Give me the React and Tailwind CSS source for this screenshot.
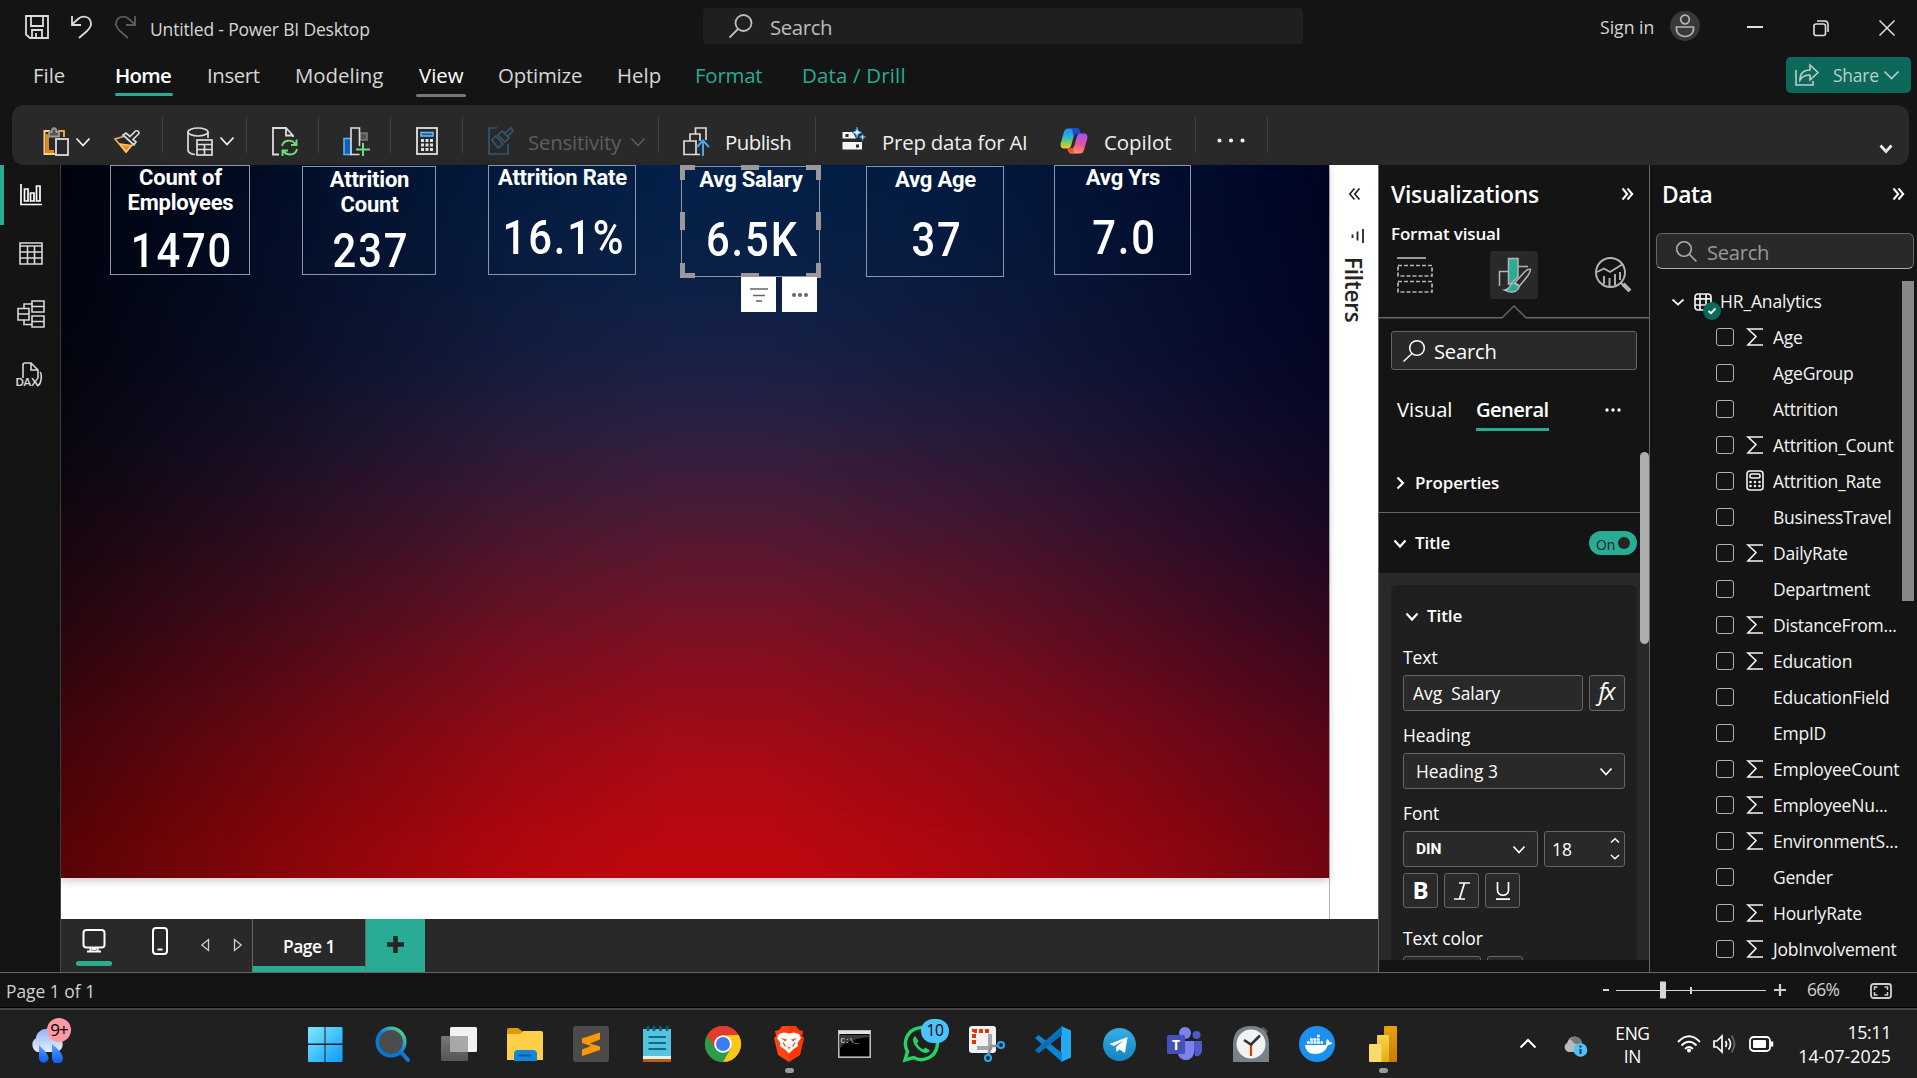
import React from "react";

const Svg = ({ w, h, vb, className = "", children, sw = 1.5 }) => (
  <svg
    width={w}
    height={h}
    viewBox={vb || `0 0 ${w} ${h}`}
    fill="none"
    stroke="currentColor"
    strokeWidth={sw}
    className={`block shrink-0 overflow-visible ${className}`}
  >
    {children}
  </svg>
);

const Chevron = ({ w = 14, h = 7, sw = 1.8, className = "" }) => (
  <Svg w={w} h={h} sw={sw} className={className}>
    <path d={`M0.5 0.5 L${w / 2} ${h - 0.5} L${w - 0.5} 0.5`} />
  </Svg>
);

/* ---------- Title bar ---------- */

function TitleBar() {
  return (
    <div className="flex h-[52px] items-start text-[#d6d6d6]">
      <Svg w={24} h={24} sw={1.8} className="mt-[15px] ml-[25px] text-[#dcdcdc]">
        <path d="M1 1H23V23H5L1 19.5Z M6 1V11H18V1 M7 23V15H17V23 M11 18V23" />
      </Svg>
      <Svg w={21} h={24} sw={1.8} className="mt-[15px] ml-[22px] text-[#dcdcdc]">
        <path d="M1 1V10H10 M1 9.5L7 4C11 0 20 1 20 9C20 12 18 14 16 16L8 23" />
      </Svg>
      <Svg w={21} h={24} sw={1.8} className="mt-[15px] ml-[23px] text-[#5c5c5c]">
        <path d="M20 1V10H11 M20 9.5L14 4C10 0 1 1 1 9C1 12 3 14 5 16L13 23" />
      </Svg>
      <span className="mt-[15px] ml-[14px] w-[230px] text-[17.5px] leading-[28px] tracking-[-0.01em]">
        Untitled - Power BI Desktop
      </span>
      <div className="mt-[8px] ml-[323px] flex h-[36px] w-[600px] items-center rounded bg-[#1f1f1f] pl-[26px] text-[#bdbdbd]">
        <Svg w={24} h={24} sw={1.8}>
          <circle cx="14.5" cy="9" r="8" />
          <path d="M9 15L0.5 23.5" />
        </Svg>
        <span className="mt-[1px] ml-[17px] text-[20.4px] leading-[30px] tracking-[-0.02em]">Search</span>
      </div>
      <span className="mt-[13px] ml-[297px] w-[56px] text-[17.6px] leading-[28px]">Sign in</span>
      <div className="mt-[11px] ml-[14px] flex h-[30px] w-[30px] items-center justify-center rounded-full bg-[#383838]">
        <Svg w={20} h={24} sw={1.7} className="text-[#b5b5b5]">
          <circle cx="10" cy="5.5" r="4.3" />
          <path d="M1.5 13H18.5V15C18.500 20 14 22.500 10 22.500S1.500 20 1.500 15Z" />
        </Svg>
      </div>
      <div className="mt-[26px] ml-[47px] h-[2px] w-[16px] bg-[#dedede]" />
      <Svg w={16} h={16} sw={1.6} className="mt-[20px] ml-[50px] text-[#e0e0e0]">
        <rect x="1" y="4" width="11.500" height="11.500" rx="2" />
        <path d="M4 1H11.500Q15 1 15 4.500V12" />
      </Svg>
      <Svg w={16} h={16} sw={1.5} className="mt-[20px] ml-[50px] text-[#e0e0e0]">
        <path d="M0.500 0.500L15.500 15.500M15.500 0.500L0.500 15.500" />
      </Svg>
    </div>
  );
}

/* ---------- Menu tabs ---------- */

const menuTabs = [
  { label: "File", cls: "ml-[33px] w-[34px]" },
  { label: "Home", cls: "ml-[48px] w-[58px] font-semibold text-white tracking-[-0.035em]", bar: "mt-[3px] w-[58px] bg-[#2aac94]" },
  { label: "Insert", cls: "ml-[34px] w-[54px] tracking-[-0.02em]" },
  { label: "Modeling", cls: "ml-[34px] w-[90px]" },
  { label: "View", cls: "ml-[34px] w-[46px] font-medium text-white", bar: "mt-[4px] -ml-[3px] w-[50px] bg-[#777777]" },
  { label: "Optimize", cls: "ml-[33px] w-[87px] tracking-[-0.01em]" },
  { label: "Help", cls: "ml-[32px] w-[44px]" },
  { label: "Format", cls: "ml-[34px] w-[70px] text-[#2aac94] tracking-[-0.01em]" },
  { label: "Data / Drill", cls: "ml-[37px] w-[110px] text-[#2aac94] tracking-[0.01em]" },
];

function MenuBar() {
  return (
    <div className="flex h-[53px] text-[20.4px] text-[#d6d6d6]">
      {menuTabs.map((t) => (
        <div key={t.label} className={`pt-[8px] whitespace-nowrap ${t.cls}`}>
          <div className="leading-[30px]">{t.label}</div>
          {t.bar && <div className={`h-[3px] rounded-sm ${t.bar}`} />}
        </div>
      ))}
      <div className="mt-[5px] mr-[6px] ml-auto flex h-[36px] w-[125px] items-center rounded-[5px] bg-[#0c695a] pl-[9px] text-[#b9cfca]">
        <Svg w={24} h={22} sw={1.6}>
          <path d="M1 6V21H18V17 M5 16C5 9 9 6 15 6V1L23 8.500L15 16V11C10 11 7 12.500 5 16Z" />
        </Svg>
        <span className="ml-[14px] w-[44px] text-[17.4px] leading-[28px] tracking-[-0.01em]">Share</span>
        <Chevron w={15} h={8} sw={1.6} className="ml-[7px]" />
      </div>
    </div>
  );
}

/* ---------- Ribbon ---------- */

const Sep = ({ className }) => <div className={`h-[36px] w-px shrink-0 bg-[#404040] ${className}`} />;

function Ribbon() {
  return (
    <div className="mr-[8px] ml-[12px] flex h-[60px] items-center rounded-[12px] bg-[#292929] text-[20.4px] whitespace-nowrap text-[#f0f0f0]">
      <Svg w={26} h={29} sw={1.8} className="mt-[13px] ml-[31px]">
        <path d="M7 4H1.500V27H12" stroke="#ffd27f" strokeWidth="2" />
        <path d="M4.500 7V24.500H11" stroke="#e08a1e" strokeWidth="3" />
        <path d="M15 4H21V10" stroke="#e9a23b" strokeWidth="2" />
        <path d="M6 9.500V5H8.500C8.500 0 13.500 0 13.500 5H16V9.500Z" stroke="#9a9a9a" fill="#555" />
        <rect x="13" y="12" width="12" height="16" fill="#292929" stroke="#dcdcdc" />
      </Svg>
      <Chevron w={14} h={8} className="mt-[13px] ml-[7px]" />
      <Svg w={27} h={23} sw={1.5} className="mt-[12px] ml-[23px]">
        <path d="M2 9L13 22L20 14L12 6Z" fill="#292929" stroke="#e6b566" />
        <path d="M7 14L13 22L18.500 15.500Z" fill="#f0901c" stroke="#ffc36b" />
        <path d="M10 5L21 15L23 12L20 9.500L26 3.500Q26 0 22.500 1L17 6.500L13 3Z" fill="#292929" stroke="#d9d9d9" strokeWidth="1.700" />
      </Svg>
      <Sep className="ml-[22px]" />
      <Svg w={26} h={29} sw={1.7} className="mt-[13px] ml-[24px] text-[#dcdcdc]">
        <ellipse cx="11" cy="5" rx="10" ry="4" />
        <path d="M1 5V23C1 25.500 4 27 8 27.500M21 5V11" />
        <rect x="10" y="13" width="15" height="15" fill="#292929" />
        <path d="M10 17.500H25M10 22.500H25M17.500 17.500V28" />
      </Svg>
      <Chevron w={14} h={8} className="mt-[11px] ml-[7px]" />
      <Sep className="ml-[12px]" />
      <Svg w={26} h={29} sw={1.8} className="mt-[13px] ml-[25px] text-[#dcdcdc]">
        <path d="M7 27.500H1V1H14L21 8.500V10M14 1V8.500H20" />
        <path d="M10 19C11.500 12.500 20 12 23.500 17M24.500 12.500V18H19M25 22C23.500 28.500 15.500 29 11.500 24.500M10.500 29V23.500H16" stroke="#6fdc7c" strokeWidth="1.900" />
      </Svg>
      <Sep className="ml-[20px]" />
      <Svg w={27} h={29} sw={1.6} className="mt-[13px] ml-[24px] text-[#dcdcdc]">
        <rect x="17" y="6" width="7" height="7" fill="#555" stroke="#777" />
        <rect x="1" y="11.500" width="7" height="16" fill="#0b63b5" stroke="#5ab0f2" />
        <path d="M16.500 27.500H8V1H16.500V19" fill="#292929" />
        <path d="M13 22.500H27M20 16V29" stroke="#6fdc7c" strokeWidth="2" />
      </Svg>
      <Sep className="ml-[20px]" />
      <Svg w={22} h={28} sw={1.8} className="mt-[12px] ml-[25px] text-[#e0e0e0]">
        <rect x="1" y="1" width="20" height="26" />
        <rect x="5" y="5.500" width="12" height="3.500" fill="#0b63b5" stroke="#6bb8f7" strokeWidth="1.500" />
        <path d="M5 13.500H17M5 18H17M5 22.500H17" strokeWidth="3" strokeDasharray="3 1.500" />
      </Svg>
      <Sep className="ml-[24px]" />
      <Svg w={26} h={28} sw={1.7} className="mt-[12px] ml-[25px] text-[#33566f]">
        <path d="M9 1H1V27H20V17" />
        <path d="M4 13L8 9L15 17L10 21Z M10 8L14 4L21 11L17 15Z M16 7L23 1L25 4L20 9" />
      </Svg>
      <span className="mt-[14px] ml-[14px] w-[94px] tracking-[-0.01em] text-[#5e5e5e]">Sensitivity</span>
      <Chevron w={14} h={8} sw={1.5} className="mt-[14px] ml-[9px] text-[#5e5e5e]" />
      <Sep className="ml-[13px]" />
      <Svg w={27} h={29} sw={1.7} className="mt-[13px] ml-[24px] text-[#dcdcdc]">
        <path d="M14 14H1V27.500H17M7 14V7H17V14M12.500 7V1H23V13M13 14V27" />
        <path d="M20 29V14M14 20L20 13.500L26 20" stroke="#4ea6ea" strokeWidth="2" />
      </Svg>
      <span className="mt-[14px] ml-[15px] w-[70px] tracking-[-0.025em]">Publish</span>
      <Sep className="ml-[20px]" />
      <Svg w={24} h={24} sw={1} className="mt-[8px] ml-[26px]">
        <path d="M0.500 5H11L14 11.500H0.500Z M0.500 15H20V22.500H0.500Z" fill="#f5f5f5" stroke="none" />
        <rect x="3.500" y="7" width="3" height="3" fill="#292929" stroke="none" />
        <rect x="14" y="17.500" width="3" height="3" fill="#292929" stroke="none" />
        <path d="M15 0L16.300 4L20 5.500L16.300 7L15 11L13.700 7L10 5.500L13.700 4Z M20.500 7L21.400 9.200L23.500 10L21.400 10.800L20.500 13.500L19.600 10.800L17.500 10L19.600 9.200Z" fill="#d9f1ff" stroke="#2c8fd6" />
      </Svg>
      <span className="mt-[14px] ml-[16px] w-[148px] tracking-[-0.01em]">Prep data for AI</span>
      <svg width="28" height="26" viewBox="0 0 28 26" className="mt-[11px] ml-[30px] block shrink-0">
        <defs>
          <linearGradient id="cpA" x1="0" y1="0" x2="0" y2="1">
            <stop offset="0" stopColor="#1b8ef2" />
            <stop offset="0.45" stopColor="#2fb8c9" />
            <stop offset="0.75" stopColor="#8fd14a" />
            <stop offset="1" stopColor="#f8c51c" />
          </linearGradient>
          <linearGradient id="cpB" x1="0.5" y1="0" x2="0.3" y2="1">
            <stop offset="0" stopColor="#a553f2" />
            <stop offset="0.5" stopColor="#e6549c" />
            <stop offset="1" stopColor="#ff9a50" />
          </linearGradient>
        </defs>
        <path d="M8 0.500H17C19 0.500 19.500 2 20.500 5.500H17C15 5.500 14 7 13.500 9L11 18C10.500 19.500 9.500 20.500 7.500 20.500H4C1 20.500 0 18 0.800 15L4 4C4.800 1.500 6 0.500 8 0.500Z" fill="url(#cpA)" />
        <path d="M12 0.500H17C19 0.500 19.500 2 20.500 6H16Q14 6 13.500 8Z" fill="#1f49cf" />
        <path d="M20 25.500H11C9 25.500 8.500 24 7.500 20.500H11C13 20.500 14 19 14.500 17L17 8C17.500 6.500 18.500 5.500 20.500 5.500H24C27 5.500 28 8 27.200 11L24 22C23.200 24.500 22 25.500 20 25.500Z" fill="url(#cpB)" />
        <path d="M7.500 20.500H11Q13 20.500 14 18L13 25.500H11C9 25.500 8.500 24 7.500 20.500Z" fill="#f0503c" />
      </svg>
      <span className="mt-[14px] ml-[16px] w-[70px]">Copilot</span>
      <Sep className="ml-[21px]" />
      <Svg w={28} h={5} className="mt-[11px] ml-[21px]">
        <path d="M2.500 2.500h.01M14 2.500h.01M25.500 2.500h.01" strokeWidth="4.200" strokeLinecap="round" />
      </Svg>
      <Sep className="ml-[22px]" />
      <Chevron w={12} h={7} sw={2.6} className="mt-[27px] mr-[17px] ml-auto" />
    </div>
  );
}

/* ---------- Left rail ---------- */

function LeftRail() {
  return (
    <div className="flex w-[61px] shrink-0 border-r border-[#454545] text-[#d8d8d8]">
      <div className="h-[60px] w-[4px] bg-[#2aac94]" />
      <div className="flex w-[53px] flex-col items-center">
        <Svg w={22} h={22} sw={1.7} className="mt-[19px] text-white">
          <path d="M1 0V20.500H22" />
          <path d="M4.500 17V5H8V17Z M10.500 17V9H14V17Z M16.500 17V2H20V17Z" />
        </Svg>
        <Svg w={24} h={23} sw={1.6} className="mt-[36px]">
          <path d="M1 1H23V22H1Z M1 4H23M1 10H23M1 16H23M8.500 4V22M15.500 4V22" />
        </Svg>
        <Svg w={28} h={28} sw={1.6} className="mt-[35px]">
          <path d="M15 1H27V12H15Z M15 6.500H27M15 16H27V27H15Z M15 21.500H27M1 8.500H12V20H1Z M1 14H12M7 8.500V4H15M7 20V24.500H15" />
        </Svg>
        <Svg w={28} h={25} sw={1.6} className="mt-[34px] -ml-[2px]">
          <path d="M7 16V3Q7 1 9 1H15L22 8V16M15 1V8H22M24 10Q26 12 25 18Q24 23 21 24" />
          <text x="-0.500" y="24" fill="currentColor" stroke="none" fontSize="11" fontWeight="700" className="font-['Lato',sans-serif]">
            DAX
          </text>
        </Svg>
      </div>
    </div>
  );
}

/* ---------- Report canvas ---------- */

const cards = [
  { title: ["Count of", "Employees"], value: "1470", box: "left-[49px] top-0 h-[110px] w-[140px]", t: "mt-0", v: "top-[59px]" },
  { title: ["Attrition", "Count"], value: "237", box: "left-[241px] top-[1px] h-[109px] w-[134px]", t: "mt-[1px]", v: "top-[58px]" },
  { title: ["Attrition Rate"], value: "16.1%", box: "left-[427px] top-0 h-[110px] w-[148px]", t: "mt-0", v: "top-[46px]" },
  { title: ["Avg Salary"], value: "6.5K", box: "left-[620px] top-[1px] h-[111px] w-[139px] border-[#6f7480]", t: "mt-[1px]", v: "top-[47px]", selected: true },
  { title: ["Avg Age"], value: "37", box: "left-[805px] top-[1px] h-[111px] w-[138px]", t: "mt-[1px]", v: "top-[47px]" },
  { title: ["Avg Yrs"], value: "7.0", box: "left-[993px] top-0 h-[110px] w-[137px]", t: "mt-0", v: "top-[46px]" },
];

function Handles() {
  return (
    <>
      <i className="absolute -top-[2px] -left-[2px] h-[15px] w-[15px] border-t-[5px] border-l-[5px] border-[#999]" />
      <i className="absolute -top-[2px] -right-[2px] h-[15px] w-[15px] border-t-[5px] border-r-[5px] border-[#999]" />
      <i className="absolute -bottom-[2px] -left-[2px] h-[15px] w-[15px] border-b-[5px] border-l-[5px] border-[#999]" />
      <i className="absolute -right-[2px] -bottom-[2px] h-[15px] w-[15px] border-r-[5px] border-b-[5px] border-[#999]" />
      <i className="absolute -top-[2px] left-[59px] h-[5px] w-[18px] bg-[#999]" />
      <i className="absolute -bottom-[2px] left-[59px] h-[5px] w-[18px] bg-[#999]" />
      <i className="absolute top-[45px] -left-[2px] h-[18px] w-[5px] bg-[#999]" />
      <i className="absolute top-[45px] -right-[2px] h-[18px] w-[5px] bg-[#999]" />
    </>
  );
}

function Canvas() {
  return (
    <div className="flex h-[754px] w-[1268px] shrink-0 flex-col bg-white">
      <div className="relative h-[713px] overflow-hidden bg-[linear-gradient(to_bottom,#03214a_0%,#0c2249_16%,#1a2247_28%,#2f2142_38%,#4a1c38_48%,#6a162c_59%,#8a0f20_70%,#a80b16_82%,#bc080f_93%,#c4070e_100%)] shadow-[0_3px_8px_rgba(0,0,0,0.2)]">
        <div className="absolute inset-0 bg-[linear-gradient(to_right,rgba(0,0,0,0.55)_0%,rgba(0,0,0,0.42)_9%,rgba(0,0,0,0.25)_22%,rgba(0,0,0,0.09)_36%,rgba(0,0,0,0.02)_48%,rgba(0,0,8,0.02)_56%,rgba(0,0,16,0.1)_70%,rgba(0,0,20,0.24)_85%,rgba(0,0,24,0.42)_100%)]" />
        <div className="absolute inset-0 bg-[linear-gradient(to_right,rgba(0,0,6,0.78)_0%,rgba(0,0,14,0.56)_9%,rgba(0,0,24,0.3)_22%,rgba(0,0,24,0.09)_36%,rgba(0,0,24,0.01)_48%,rgba(0,0,28,0.02)_58%,rgba(0,0,28,0.18)_76%,rgba(0,0,30,0.44)_88%,rgba(0,0,28,0.76)_100%)] mask-[linear-gradient(to_bottom,black_0%,rgba(0,0,0,0.9)_25%,rgba(0,0,0,0.5)_55%,rgba(0,0,0,0.15)_78%,transparent_95%)]" />
        {cards.map((c) => (
          <div key={c.value} className={`absolute border border-[#8d95a6] text-center font-['Roboto',sans-serif] text-white ${c.box}`}>
            <div className={`pl-[1px] text-[22px] leading-[24.5px] font-bold tracking-[-0.01em] whitespace-nowrap ${c.t}`}>
              {c.title.map((l) => (
                <div key={l}>{l}</div>
              ))}
            </div>
            <div className={`absolute -right-[4px] left-0 scale-x-[0.87] text-[48px] leading-[52px] font-medium tracking-[0.045em] ${c.v}`}>{c.value}</div>
            {c.selected && <Handles />}
          </div>
        ))}
        <div className="absolute top-[112px] left-[680px] flex gap-[6px] text-[#666]">
          <div className="flex h-[35px] w-[35px] items-center justify-center bg-white">
            <Svg w={18} h={14} sw={1.7}>
              <path d="M0 1H18M3 7.500H15M6 13H12" />
            </Svg>
          </div>
          <div className="flex h-[35px] w-[35px] items-center justify-center bg-white">
            <Svg w={16} h={4}>
              <path d="M2 2h.01M8 2h.01M14 2h.01" strokeWidth="4" strokeLinecap="round" />
            </Svg>
          </div>
        </div>
      </div>
    </div>
  );
}

function Filters() {
  return (
    <div className="flex h-[754px] w-[49px] shrink-0 flex-col items-center border-l border-[#b3b3b3] bg-white text-[#252423]">
      <Svg w={11} h={12} sw={1.7} className="mt-[23px]">
        <path d="M5.500 0.500L0.800 6L5.500 11.500M10.500 0.500L5.800 6L10.500 11.500" />
      </Svg>
      <Svg w={13} h={14} sw={1.8} className="mt-[29px] ml-[7px]">
        <path d="M12 0V14M6.500 2.500V11.500M1.500 5.500V9" />
      </Svg>
      <span className="mt-[14px] -ml-[2px] text-[22.5px] leading-[28px] font-semibold tracking-[-0.01em] [writing-mode:vertical-rl]">Filters</span>
    </div>
  );
}

function PageTabs() {
  return (
    <div className="flex h-[53px] w-[1317px] bg-[#292929]">
      <div className="ml-[15px] flex w-[36px] flex-col items-center">
        <Svg w={24} h={24} sw={2} className="mt-[10px] text-white">
          <rect x="1.500" y="1" width="21" height="17.500" rx="3" />
          <path d="M8.500 18.500V22M15.500 18.500V22M5 22.500H19M10 20H14" />
        </Svg>
        <div className="mt-[8px] h-[5px] w-[36px] rounded-full bg-[#2aac94]" />
      </div>
      <Svg w={16} h={28} sw={2} className="mt-[8px] ml-[40px] text-white">
        <rect x="1" y="1" width="14" height="26" rx="3" />
        <path d="M5.500 22.500H10.500" />
      </Svg>
      <Svg w={8} h={12} sw={1.3} className="mt-[20px] ml-[33px] text-[#cfcfcf]">
        <path d="M7.500 0.500V11.500L0.800 6Z" />
      </Svg>
      <Svg w={8} h={12} sw={1.3} className="mt-[20px] ml-[25px] text-[#cfcfcf]">
        <path d="M0.500 0.500V11.500L7.200 6Z" />
      </Svg>
      <div className="ml-[10px] flex h-[53px] w-[114px] items-center justify-center border-x border-b-[6px] border-x-[#666] border-b-[#2aac94] text-[17.4px] font-semibold tracking-[-0.03em] text-white">
        <span className="pt-[8px]">Page 1</span>
      </div>
      <div className="flex w-[59px] justify-center bg-[#2aac94] pt-[17px]">
        <Svg w={17} h={17} sw={4.6} className="text-[#252423]">
          <path d="M8.500 0V17M0 8.500H17" />
        </Svg>
      </div>
    </div>
  );
}

/* ---------- Visualizations pane ---------- */

const Collapse = () => (
  <Svg w={11} h={12} sw={2}>
    <path d="M0.500 0.500L5.200 6L0.500 11.500M5.500 0.500L10.200 6L5.500 11.500" />
  </Svg>
);

const Box = ({ className, children }) => <div className={`flex items-center rounded-[3px] border border-[#666] bg-[#292929] ${className}`}>{children}</div>;

function Visualizations() {
  return (
    <div className="flex w-[272px] shrink-0 flex-col overflow-hidden border-x border-[#666] text-[17.4px] whitespace-nowrap text-white">
      <div className="flex h-[60px] items-center justify-between pr-[16px] pb-[2px] pl-[12px]">
        <span className="pt-[2px] text-[22.9px] font-semibold tracking-[-0.012em]">Visualizations</span>
        <Collapse />
      </div>
      <div className="h-[26px] pl-[12px] text-[17px] leading-[17px] font-semibold tracking-[-0.01em]">Format visual</div>
      <div className="flex text-[#b5b5b5]">
        <Svg w={36} h={36} sw={1.7} className="mt-[6px] ml-[18px]">
          <path d="M0 1H29" />
          <path d="M1 8.500H35V19H1Z M1 24.500H35V35H1Z" strokeDasharray="4 2" />
        </Svg>
        <div className="ml-[57px] flex h-[48px] w-[48px] items-center justify-center rounded-[4px] bg-[#292929]">
          <Svg w={34} h={36} sw={1.5}>
            <path d="M2.500 29V14.500H11M21 9.500H31" />
            <path d="M11.500 27V1.500H21V20L14 26.500Z" fill="#2aac94" />
            <path d="M33.500 12.500Q31.500 11.500 28 14.500L18 25.500L22.500 29L31 18.500Q33.500 15 33.500 12.500Z" fill="#292929" />
            <path d="M17 26Q13.500 27 12.500 29.500Q11.500 32.500 7 33Q17 37.500 21 32.500Q22.500 30.500 22 29Z" fill="#2aac94" stroke="#c0c0c0" strokeWidth="1.200" />
          </Svg>
        </div>
        <Svg w={36} h={36} sw={1.9} className="mt-[6px] ml-[57px]">
          <circle cx="15.500" cy="15.500" r="14.500" />
          <path d="M2 15L9 11.500L15 15L28 7M9 19V27M14.500 21V29M20 17V28M25 15V23M26 26L30 30" />
          <path d="M28 27L35 34" strokeWidth="4" />
        </Svg>
      </div>
      <Svg w={270} h={14} sw={1.4} className="mt-[6px] text-[#666]">
        <path d="M0 12.800H123L135 1L147 12.800H270" />
      </Svg>
      <Box className="mt-[12px] ml-[12px] h-[39px] w-[246px] shrink-0 pl-[11px] text-[20.2px]">
        <Svg w={22} h={22} sw={1.5}>
          <circle cx="14" cy="8" r="7.300" />
          <path d="M9 13.500L0.500 21.500" />
        </Svg>
        <span className="ml-[9px] leading-[30px] tracking-[-0.01em]">Search</span>
      </Box>
      <div className="mt-[23px] flex h-[38px] pl-[18px] text-[20.200px]">
        <span className="w-[79px] leading-[32px]">Visual</span>
        <div className="w-[73px]">
          <div className="leading-[32px] font-semibold tracking-[-0.03em]">General</div>
          <div className="mt-[3px] h-[3px] bg-[#2aac94]" />
        </div>
        <Svg w={16} h={4} className="mt-[15px] ml-[56px]">
          <path d="M2 2h.01M8 2h.01M14 2h.01" strokeWidth="3.400" strokeLinecap="round" />
        </Svg>
      </div>
      <div className="flex min-h-0 grow">
        <div className="flex w-[261px] flex-col">
          <div className="flex h-[82px] shrink-0 items-center border-b border-[#666] pt-[23px] pl-[18px] text-[17px] font-semibold tracking-[-0.008em]">
            <Svg w={7} h={12} sw={2.200}>
              <path d="M0.500 0.500L6 6L0.500 11.500" />
            </Svg>
            <span className="ml-[11px]">Properties</span>
          </div>
          <div className="flex h-[60px] shrink-0 items-center pl-[15px] text-[17px] font-semibold tracking-[-0.005em]">
            <Chevron w={12} h={7} sw={2.200} />
            <span className="ml-[9px]">Title</span>
            <div className="mr-[3px] ml-auto flex h-[24px] w-[48px] items-center rounded-full bg-[#2aac94] pl-[7px] text-[14px] font-normal text-[#252423]">
              <span className="w-[20px] pt-[2px]">On</span>
              <div className="ml-[2px] h-[12px] w-[12px] rounded-full bg-[#252423]" />
            </div>
          </div>
          <div className="h-[387px] overflow-hidden bg-[#292929] pt-[12px] pl-[12px]">
            <div className="h-[400px] w-[246px] rounded-[6px] bg-[#1f1f1f] px-[12px] pt-[18px]">
              <div className="flex h-[26px] items-center pl-[3px] text-[17px] font-semibold tracking-[-0.005em]">
                <Chevron w={12} h={7} sw={2.200} />
                <span className="ml-[9px]">Title</span>
              </div>
              <div className="mt-[15px] leading-[26px]">Text</div>
              <div className="mt-[5px] flex gap-[6px]">
                <Box className="h-[36px] w-[180px] pl-[9px] whitespace-pre">Avg  Salary</Box>
                <Box className="h-[36px] w-[36px] justify-center text-[24px] tracking-[-0.08em] italic">
                  <span className="-mt-[4px] -ml-[2px]">fx</span>
                </Box>
              </div>
              <div className="mt-[11px] leading-[26px]">Heading</div>
              <Box className="mt-[5px] h-[36px] w-[222px] justify-between pr-[12px] pl-[12px]">
                Heading 3
                <Chevron w={12} h={7} sw={1.7} />
              </Box>
              <div className="mt-[11px] leading-[26px]">Font</div>
              <div className="mt-[5px] flex gap-[6px]">
                <Box className="h-[36px] w-[135px] justify-between pr-[12px] pl-[12px]">
                  <span className="pt-[1px] font-['Roboto',sans-serif] text-[15.500px] font-bold">DIN</span>
                  <Chevron w={12} h={7} sw={1.7} />
                </Box>
                <Box className="h-[36px] w-[81px] justify-between pr-[5px] pl-[7px]">
                  18
                  <Svg w={8} h={22} sw={1.500}>
                    <path d="M0 4.500L4 0.800L8 4.500M0 17L4 20.700L8 17" />
                  </Svg>
                </Box>
              </div>
              <div className="mt-[6px] flex gap-[6px] text-[24px]">
                <Box className="h-[35px] w-[35px] justify-center bg-[#141414] font-bold">
                  <span className="-mt-[1px]">B</span>
                </Box>
                <Box className="h-[35px] w-[35px] justify-center">
                  <Svg w={16} h={18} sw={1.700}>
                    <path d="M5 1H16M0 17H11M10.500 1L5.500 17" />
                  </Svg>
                </Box>
                <Box className="h-[35px] w-[35px] justify-center">
                  <Svg w={14} h={18} sw={1.700}>
                    <path d="M1.500 0V8C1.500 15 12.500 15 12.500 8V0M0 17.200H14" />
                  </Svg>
                </Box>
              </div>
              <div className="mt-[17px] leading-[26px]">Text color</div>
              <div className="mt-[5px] flex gap-[6px]">
                <Box className="h-[36px] w-[78px]" />
                <Box className="h-[36px] w-[36px]" />
              </div>
            </div>
          </div>
        </div>
        <div className="mt-[142px] flex h-[387px] w-[9px] bg-[#292929]">
          <div className="-mt-[121px] h-[192px] w-[9px] rounded-full bg-[#adadad]" />
        </div>
      </div>
    </div>
  );
}

/* ---------- Data pane ---------- */

const fields = [
  ["Age", "sum"],
  ["AgeGroup"],
  ["Attrition"],
  ["Attrition_Count", "sum"],
  ["Attrition_Rate", "calc"],
  ["BusinessTravel"],
  ["DailyRate", "sum"],
  ["Department"],
  ["DistanceFrom...", "sum"],
  ["Education", "sum"],
  ["EducationField"],
  ["EmpID"],
  ["EmployeeCount", "sum"],
  ["EmployeeNu...", "sum"],
  ["EnvironmentS...", "sum"],
  ["Gender"],
  ["HourlyRate", "sum"],
  ["JobInvolvement", "sum"],
];

function DataPane() {
  return (
    <div className="flex w-[267px] shrink-0 flex-col whitespace-nowrap text-white">
      <div className="flex h-[60px] items-center justify-between pr-[13px] pb-[2px] pl-[12px]">
        <span className="pt-[2px] text-[22.8px] font-semibold tracking-[-0.02em]">Data</span>
        <Collapse />
      </div>
      <div className="mt-[8px] ml-[6px] flex h-[36px] w-[258px] items-center rounded-[6px] border border-[#666] border-b-[#adadad] bg-[#292929] pl-[19px] text-[20.200px] text-[#999]">
        <Svg w={21} h={21} sw={1.600} className="text-[#adadad]">
          <circle cx="8" cy="8" r="7.300" />
          <path d="M13.500 13.500L20.500 20.500" />
        </Svg>
        <span className="mt-[2px] ml-[10px] leading-[30px] tracking-[-0.015em]">Search</span>
      </div>
      <div className="mt-[12px] flex text-[17.500px] text-[#f3f3f3]">
        <div className="w-[252px]">
          <div className="flex h-[38px] items-center pt-[3px] pl-[22px]">
            <Chevron w={12} h={6} sw={1.700} />
            <div className="relative ml-[10px]">
              <Svg w={18} h={18} sw={1.700}>
                <rect x="1" y="1" width="16" height="16" rx="3" />
                <path d="M1 5.800H17M1 12H17M6 1V17M12 1V17" />
              </Svg>
              <div className="absolute top-[9px] left-[9px] flex h-[18px] w-[18px] items-center justify-center rounded-full bg-[#0c695a]">
                <Svg w={8} h={6} sw={2}>
                  <path d="M0.500 3L3 5.200L7.500 0.500" />
                </Svg>
              </div>
            </div>
            <span className="ml-[8px] tracking-[-0.008em]">HR_Analytics</span>
          </div>
          {fields.map(([name, kind]) => (
            <div key={name} className="flex h-[36px] items-center pl-[66px]">
              <div className="h-[18px] w-[18px] rounded-[3px] border border-[#b0b0b0]" />
              <div className="-mt-[1px] ml-[12px] flex w-[18px] justify-center">
                {kind === "sum" && (
                  <Svg w={16} h={18} sw={1.600}>
                    <path d="M16 1H1L9 8.500L1 17H16" />
                  </Svg>
                )}
                {kind === "calc" && (
                  <Svg w={18} h={21} sw={1.600}>
                    <rect x="1" y="1" width="16" height="19" rx="3" />
                    <rect x="4" y="4" width="10" height="4" rx="1.500" />
                    <path d="M4.500 12h.01M9 12h.01M13.500 12h.01M4.500 16h.01M9 16h.01M13.500 16h.01" strokeWidth="2.600" strokeLinecap="round" />
                  </Svg>
                )}
              </div>
              <span className="mt-[1px] ml-[9px] tracking-[-0.013em]">{name}</span>
            </div>
          ))}
        </div>
        <div className="h-[320px] w-[12px] bg-[#8a8886]" />
      </div>
    </div>
  );
}

/* ---------- Status bar ---------- */

function StatusBar() {
  return (
    <div className="flex h-[34px] items-center text-[17.400px] text-[#d0d0d0]">
      <span className="ml-[6px] pt-[2px]">Page 1 of 1</span>
      <div className="mr-[25px] ml-auto flex items-center">
        <div className="mr-[7px] h-[2px] w-[6px] bg-[#d6d6d6]" />
        <Svg w={150} h={18} sw={1}>
          <path d="M0 9.500H150" stroke="#d6d6d6" />
          <rect x="44" y="0.500" width="6" height="17" fill="#d6d6d6" stroke="none" />
          <path d="M75 6V13" stroke="#d6d6d6" strokeWidth="2" />
        </Svg>
        <Svg w={12} h={12} sw={2.200} className="ml-[8px]">
          <path d="M6 0V12M0 6H12" />
        </Svg>
        <span className="-mt-[2px] ml-[21px] w-[63px] tracking-[-0.04em]">66%</span>
        <Svg w={22} h={16} sw={1.800} className="mt-[2px]">
          <rect x="1" y="1" width="20" height="14" rx="2.500" />
          <path d="M7.500 4H4.500V7M4.500 9V12H7.500M14.500 4H17.500V7M17.500 9V12H14.500" strokeWidth="1.500" />
        </Svg>
      </div>
    </div>
  );
}

/* ---------- Taskbar ---------- */

const Slot = ({ children, running }) => (
  <div className="flex w-[66px] shrink-0 flex-col items-center">
    <div className="mt-[16px] flex h-[36px] items-center">{children}</div>
    {running && <div className="mt-[6px] h-[5px] w-[9px] rounded-full bg-[#9b9b9b]" />}
  </div>
);

const I = ({ w = 36, h = 36, children }) => (
  <svg width={w} height={h} viewBox={`0 0 ${w} ${h}`} className="block overflow-visible">
    {children}
  </svg>
);

function Taskbar() {
  return (
    <div className="flex h-[68px] bg-[#202020] text-white">
      <div className="relative ml-[29px] w-[265px]">
        <svg width="38" height="44" viewBox="0 0 38 44" className="mt-[9px] block">
          <defs>
            <linearGradient id="cl" x1="0" y1="0" x2="0" y2="1">
              <stop offset="0" stopColor="#8fb3f5" />
              <stop offset="1" stopColor="#e8eefb" />
            </linearGradient>
            <linearGradient id="dr" x1="0" y1="0" x2="0" y2="1">
              <stop offset="0" stopColor="#5ca4ff" />
              <stop offset="1" stopColor="#0a5cf0" />
            </linearGradient>
          </defs>
          <path d="M8 33A8 8 0 0 1 7 19C8 8 26 6 29 18A8 8 0 0 1 28 33Z" fill="url(#cl)" />
          <path d="M10 26Q19.500 35 19.500 39A4.700 4.700 0 0 1 10 39Z M23 25Q34 34 34 39A5.500 5.500 0 0 1 23 39Z" fill="url(#dr)" />
        </svg>
        <div className="absolute top-[8px] left-[18px] flex h-[24px] w-[24px] items-center justify-center rounded-full bg-[#ff99a4] text-[17px] tracking-[-0.05em] text-black">9+</div>
      </div>
      <Slot>
        <div className="-ml-[4px]">
          <I>
            <defs>
              <linearGradient id="wn" x1="0" y1="0" x2="1" y2="1" gradientUnits="objectBoundingBox">
                <stop offset="0" stopColor="#7beaff" />
                <stop offset="1" stopColor="#0c9bf8" />
              </linearGradient>
            </defs>
            <path d="M1 2Q1 1 2 1H17.500V17.500H1Z M18.500 1H34.500Q35.500 1 35.500 2V17.500H18.500Z M1 19H17.500V36H2Q1 36 1 35Z M18.500 19H35.500V35Q35.500 36 34.500 36H18.500Z" fill="url(#wn)" />
          </I>
        </div>
      </Slot>
      <Slot>
        <I>
          <defs>
            <linearGradient id="sr" x1="1" y1="0" x2="0.3" y2="0.8">
              <stop offset="0" stopColor="#6be36b" />
              <stop offset="0.4" stopColor="#2fa8c8" />
              <stop offset="0.7" stopColor="#0b76d6" />
            </linearGradient>
          </defs>
          <path d="M26 26L33 34" stroke="#0f7bd8" strokeWidth="4" strokeLinecap="round" />
          <circle cx="16" cy="16" r="13.700" fill="#4a4c4e" stroke="url(#sr)" strokeWidth="3.600" />
        </I>
      </Slot>
      <Slot>
        <I>
          <defs>
            <linearGradient id="tv" x1="0" y1="0" x2="0" y2="1">
              <stop offset="0" stopColor="#777" />
              <stop offset="1" stopColor="#555" />
            </linearGradient>
          </defs>
          <rect x="9" y="1" width="27" height="25" rx="1.500" fill="#f2f2f2" />
          <rect x="0" y="10" width="27" height="25" rx="1.500" fill="url(#tv)" />
          <path d="M9 10H27V26H9Z" fill="#a8a8a8" />
        </I>
      </Slot>
      <Slot>
        <I>
          <path d="M0 4Q0 2 2 2H11L15 5V10H0Z" fill="#dd9b08" />
          <path d="M0 8H13L16 5H34Q36 5 36 7V34H0Z" fill="#ffcf48" />
          <path d="M7 35V28Q7 24 11 24H26Q30 24 30 28V35Z" fill="#1286d8" />
          <path d="M11 29.500H25" stroke="#0a5a9e" strokeWidth="2" />
        </I>
      </Slot>
      <Slot>
        <I>
          <rect width="36" height="36" rx="3" fill="#4b4b4b" />
          <path d="M27 6.500V13.500L17 17.500L27 20.500V24L9 30V23.500L18 20L9 17V12.500Z" fill="#ff9800" />
        </I>
      </Slot>
      <Slot>
        <I w={28}>
          <rect x="0" y="3" width="28" height="30" fill="#55c3dc" />
          <rect x="0" y="30" width="28" height="3" fill="#eee" />
          <rect x="0" y="33" width="28" height="3" fill="#b85c12" />
          <path d="M5.500 11H23M5.500 17H23M5.500 23H23" stroke="#0d6a8a" strokeWidth="2" />
          <path d="M5 0V5M11 0V5M17.500 0V5M24 0V5" stroke="#0b5f7e" strokeWidth="2.600" />
        </I>
      </Slot>
      <Slot>
        <I>
          <circle cx="18" cy="18" r="18" fill="#e33b2e" />
          <path d="M2.400 9A18 18 0 0 0 18 36L26 22L10 22Z" fill="#2a9d4a" />
          <path d="M33.600 9A18 18 0 0 1 18 36L26 22L18 9Z" fill="#fdc716" />
          <path d="M2.400 9A18 18 0 0 1 33.600 9L18 9.500L10 22Z" fill="#e33b2e" />
          <circle cx="18" cy="18" r="8.800" fill="#fff" />
          <circle cx="18" cy="18" r="7" fill="#3b7ded" />
        </I>
      </Slot>
      <Slot running>
        <I w={30}>
          <path d="M8 0H22L25 4L29 5L28 10L30 12L26 29L15 36L4 29L0 12L2 10L1 5L5 4Z" fill="#fa4512" />
          <path d="M15 0H22L25 4L29 5L28 10L30 12L26 29L15 36Z" fill="#ff2a00" opacity="0.550" />
          <path d="M5 8L10 6.500L15 7.500L20 6.500L25 8L27 12L23.500 17L24 20L18.500 24L15 27.500L11.500 24L6 20L6.500 17L3 12Z" fill="#fff" />
          <path d="M7 12L13 13.500L11 15.500Z M23 12L17 13.500L19 15.500Z M12.800 20L15 21.500L17.200 20L15 23.500Z" fill="#fa4512" />
          <path d="M9 16.500L11.500 20.500M21 16.500L18.500 20.500" stroke="#fa4512" strokeWidth="1.300" />
        </I>
      </Slot>
      <Slot>
        <div className="-ml-[2px]">
          <I w={33} h={28}>
            <rect x="0.800" y="0.800" width="31.400" height="26.400" fill="#000" stroke="#b5bcc4" strokeWidth="1.600" />
            <rect x="1" y="1" width="31" height="3" fill="#dfe3e8" />
            <path d="M1.500 5H31.500V7Q8 9 1.500 19Z" fill="#3a3a3a" />
            <text x="2.500" y="12.500" fill="#e8e8e8" fontSize="7.500" className="font-['Liberation_Mono',monospace]">
              C:\_
            </text>
          </I>
        </div>
      </Slot>
      <Slot>
        <div className="relative">
          <I>
            <path d="M2 34L4.500 25.500A16 16 0 1 1 10.500 31.500Z" fill="none" stroke="#25d366" strokeWidth="3.400" />
            <path d="M12 10C9 12 9.500 18 15 23C20 28 25 28 27 24.500L22.500 21.500L20 23.500Q16 21.500 14 17.500L15.500 15Z" fill="#25d366" />
          </I>
          <div className="absolute -top-[7px] left-[18px] flex h-[24px] w-[28px] items-center justify-center rounded-full bg-[#4cc2ff] text-[15.500px] tracking-[-0.03em] text-black">10</div>
        </div>
      </Slot>
      <Slot>
        <I>
          <rect x="0" y="0" width="27" height="27" rx="3" fill="#f1f1f1" />
          <path d="M5 18V5H20" fill="none" stroke="#d83b01" strokeWidth="4" strokeDasharray="4 2" />
          <path d="M21 8V22H8" fill="none" stroke="#a4a8ac" strokeWidth="4" />
          <path d="M19 29L22 20L28 20" fill="none" stroke="#8a8f94" strokeWidth="2.500" />
          <circle cx="19" cy="32" r="3" fill="none" stroke="#2aa3ee" strokeWidth="2.200" />
          <circle cx="32" cy="19" r="3" fill="none" stroke="#2aa3ee" strokeWidth="2.200" />
        </I>
      </Slot>
      <Slot>
        <I>
          <path d="M26 0L36 4.500V31.500L26 36Z" fill="#24a9f2" />
          <path d="M0 12L3.500 9L27 27V36Z" fill="#0a84d0" />
          <path d="M0 24L3.500 27.500L27 9V0Z" fill="#0a6fb8" />
        </I>
      </Slot>
      <Slot>
        <I w={33} h={33}>
          <defs>
            <linearGradient id="tg" x1="0" y1="0" x2="0" y2="1">
              <stop offset="0" stopColor="#37aee2" />
              <stop offset="1" stopColor="#1583c0" />
            </linearGradient>
          </defs>
          <circle cx="16.500" cy="16.500" r="16.500" fill="url(#tg)" />
          <path d="M6.500 16L24.500 9L22 25L16.500 21.500L13.500 24L13 19L20.500 12.500L11 18Z" fill="#fff" />
        </I>
      </Slot>
      <Slot>
        <I h={34}>
          <circle cx="18" cy="6" r="6" fill="#7b83eb" />
          <circle cx="29.500" cy="8" r="4" fill="#5059c9" />
          <path d="M26 14H35V24Q34 30 28 29Z" fill="#5059c9" />
          <path d="M11 14H27V26Q25 34 17 33Q11 31 11 26Z" fill="#7b83eb" />
          <rect x="0" y="8" width="18" height="19" rx="1.500" fill="#4750b8" />
          <text x="9" y="22.500" textAnchor="middle" fill="#fff" fontSize="14" fontWeight="700" className="font-['Open_Sans',sans-serif]">
            T
          </text>
        </I>
      </Slot>
      <Slot>
        <I>
          <rect x="28" y="2" width="7" height="5" rx="1" transform="rotate(40 31 4)" fill="#555" />
          <path d="M0 36V17Q1 0 18 0Q35 0 36 17V36Z" fill="#78828c" />
          <circle cx="18" cy="18" r="14.500" fill="#f3f3f3" />
          <path d="M18 18V30" stroke="#d83b01" strokeWidth="2.200" />
          <path d="M11 14L18 18.500L27 9.500" fill="none" stroke="#333" strokeWidth="2.600" />
        </I>
      </Slot>
      <Slot>
        <I>
          <circle cx="18" cy="18" r="18" fill="#1d8fee" />
          <path d="M6 19H27Q27 15 28 13Q30 14 30.500 16Q32 16 33.500 17Q32 19 29 19Q26 28 16 28Q7 28 6 19Z" fill="#fff" />
          <path d="M8 16.500H24M11 13.500H21M18 10H21" stroke="#fff" strokeWidth="2.600" strokeDasharray="2.800 0.600" />
        </I>
      </Slot>
      <Slot running>
        <I w={28}>
          <defs>
            <linearGradient id="pb" x1="0" y1="0" x2="0" y2="1">
              <stop offset="0" stopColor="#e6a20c" />
              <stop offset="1" stopColor="#c87a0e" />
            </linearGradient>
            <linearGradient id="pc" x1="0" y1="0" x2="0" y2="1">
              <stop offset="0" stopColor="#f8d24a" />
              <stop offset="1" stopColor="#e6aa10" />
            </linearGradient>
          </defs>
          <rect x="15" width="13" height="36" rx="1" fill="url(#pb)" />
          <rect x="8" y="9" width="12" height="27" rx="1" fill="url(#pc)" />
          <rect y="18" width="12.500" height="18" rx="1" fill="#f7dc6a" />
        </I>
      </Slot>
      <div className="mr-[26px] ml-auto flex items-start text-[17.800px] leading-[24px] whitespace-nowrap">
        <Svg w={16} h={9} sw={2} className="mt-[29px]">
          <path d="M0.500 8.500L8 1L15.500 8.500" />
        </Svg>
        <Svg w={24} h={21} sw={1.500} className="mt-[26px] ml-[27px]">
          <path d="M5 16A5 5 0 0 1 4 7Q7 -1 14 1Q19 3 19 8L12 16Z" fill="#b9b9b9" stroke="none" />
          <path d="M7 3Q13 -2 18 4L18.500 8L12 8Z" fill="#777" stroke="none" />
          <circle cx="17.500" cy="14" r="6.800" fill="#4fc3f7" stroke="none" />
          <path d="M17.500 13V18M17.500 9.500V11.500" stroke="#10303f" strokeWidth="2" />
        </Svg>
        <div className="mt-[12px] ml-[27px] w-[37px] text-center text-[17.400px] leading-[23px] tracking-[-0.02em]">
          ENG
          <br />
          IN
        </div>
        <Svg w={24} h={18} sw={1.900} className="mt-[25px] ml-[26px]">
          <path d="M1 7Q12 -4.500 23 7M4.500 10.500Q12 3 19.500 10.500M8 14Q12 10 16 14" />
          <circle cx="12" cy="15.500" r="2" fill="currentColor" stroke="none" />
        </Svg>
        <Svg w={24} h={18} sw={1.700} className="mt-[25px] ml-[12px]">
          <path d="M1 6V12H4L9 17V1L4 6Z M12.500 6Q14.500 9 12.500 12M15.500 3.500Q19.500 9 15.500 14.500" />
          <path d="M18.500 0.500Q24.500 9 18.500 17.500" stroke="#666" />
        </Svg>
        <Svg w={24} h={16} sw={1.800} className="mt-[26px] ml-[12px]">
          <rect x="1" y="1" width="20" height="14" rx="3.500" />
          <rect x="4" y="4" width="13" height="8" rx="1" fill="currentColor" stroke="none" />
          <path d="M23 5.500V10.500" strokeWidth="2.500" />
        </Svg>
        <div className="mt-[10px] ml-[20px] w-[98px] text-right">
          <div className="tracking-[-0.02em]">15:11</div>
          <div>14-07-2025</div>
        </div>
      </div>
    </div>
  );
}

export default function App() {
  return (
    <div className="h-[1078px] w-[1917px] overflow-hidden bg-[#141414] font-['Open_Sans','Noto_Sans',sans-serif]">
      <TitleBar />
      <MenuBar />
      <Ribbon />
      <div className="flex h-[807px]">
        <LeftRail />
        <div className="w-[1317px] shrink-0">
          <div className="flex">
            <Canvas />
            <Filters />
          </div>
          <PageTabs />
        </div>
        <Visualizations />
        <DataPane />
      </div>
      <div className="h-px bg-[#666]" />
      <StatusBar />
      <div className="h-px bg-black" />
      <div className="h-[2px] bg-[#444]" />
      <Taskbar />
    </div>
  );
}
